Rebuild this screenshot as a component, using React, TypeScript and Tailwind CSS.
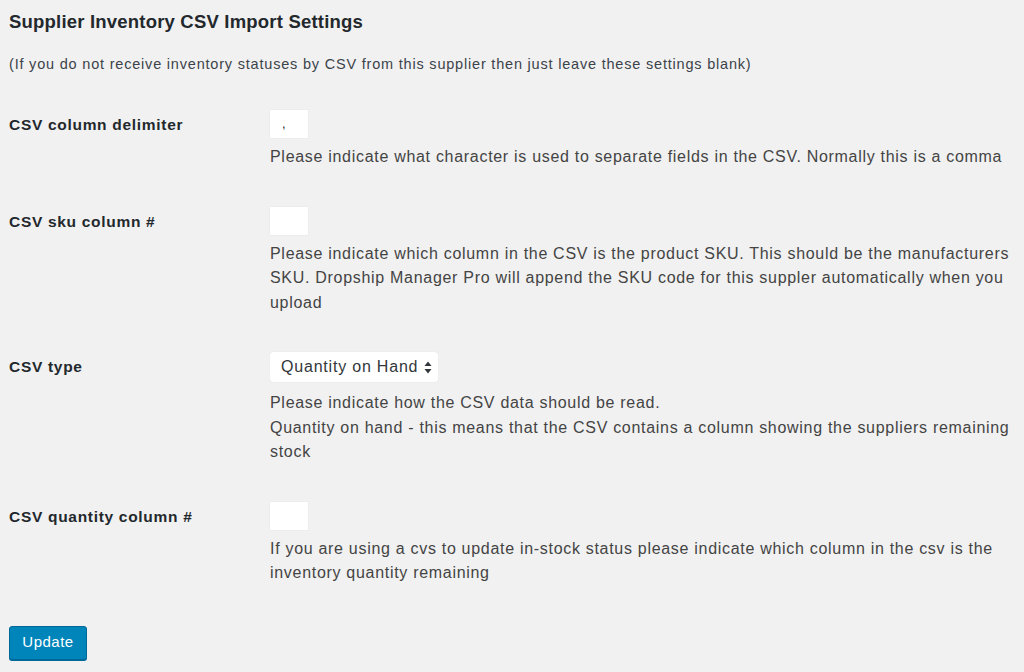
const font = { fontFamily: '"Liberation Sans", Arial, sans-serif' };

type Field = {
  label: string;
  kind: "input" | "select";
  value?: string;
  help: string[];
};

const fields: Field[] = [
  {
    label: "CSV column delimiter",
    kind: "input",
    value: ",",
    help: [
      "Please indicate what character is used to separate fields in the CSV. Normally this is a comma",
    ],
  },
  {
    label: "CSV sku column #",
    kind: "input",
    help: [
      "Please indicate which column in the CSV is the product SKU. This should be the manufacturers SKU. Dropship Manager Pro will append the SKU code for this suppler automatically when you upload",
    ],
  },
  {
    label: "CSV type",
    kind: "select",
    help: [
      "Please indicate how the CSV data should be read.",
      "Quantity on hand - this means that the CSV contains a column showing the suppliers remaining stock",
    ],
  },
  {
    label: "CSV quantity column #",
    kind: "input",
    help: [
      "If you are using a cvs to update in-stock status please indicate which column in the csv is the inventory quantity remaining",
    ],
  },
];

function SelectArrows() {
  return (
    <svg width="8" height="13" viewBox="0 0 8 13" className="ml-[6px]">
      <path d="M4 0.5 L7.5 5 L0.5 5 Z" fill="#32373c" />
      <path d="M4 12.5 L7.5 8 L0.5 8 Z" fill="#32373c" />
    </svg>
  );
}

export default function App() {
  return (
    <div
      className="min-h-[672px] w-[1024px] bg-[#f1f1f1] pl-[9px] pt-[10px] text-[#23282d]"
      style={font}
    >
      <h2 className="text-[18.5px] font-semibold leading-[24px] tracking-[0.2px]">
        Supplier Inventory CSV Import Settings
      </h2>
      <p className="mt-[20px] text-[14.5px] leading-[20px] tracking-[0.8px] text-[#3c434a]">
        (If you do not receive inventory statuses by CSV from this supplier then just leave these settings blank)
      </p>

      <div className="mt-[36px] flex flex-col gap-[37px]">
        {fields.map((f) => (
          <div key={f.label} className="flex">
            <div className="w-[261px] shrink-0 pt-[5px] text-[15.5px] font-bold leading-[20px] tracking-[0.7px]">
              {f.label}
            </div>
            <div className="w-[750px]">
              {f.kind === "input" ? (
                <div className="mb-[7px] flex h-[28px] w-[38px] items-center bg-white pl-[12px] text-[13px] shadow-[0_0_1px_rgba(0,0,0,0.12)]">
                  {f.value}
                </div>
              ) : (
                <div className="mb-[9px] flex h-[30px] w-[168px] items-center rounded-[3px] bg-white pl-[11px] text-[16px] tracking-[0.8px] text-[#32373c] shadow-[0_0_1px_rgba(0,0,0,0.15)]">
                  Quantity on Hand
                  <SelectArrows />
                </div>
              )}
              <div className="text-[16px] leading-[24.5px] tracking-[0.7px] text-[#444]">
                {f.help.map((h) => (
                  <p key={h}>{h}</p>
                ))}
              </div>
            </div>
          </div>
        ))}
      </div>

      <button className="mt-[40px] h-[34px] w-[78px] rounded-[3px] border border-[#006799] bg-[#0085ba] text-[15px] tracking-[0.5px] text-white shadow-[0_1px_0_#006799]">
        Update
      </button>
    </div>
  );
}
